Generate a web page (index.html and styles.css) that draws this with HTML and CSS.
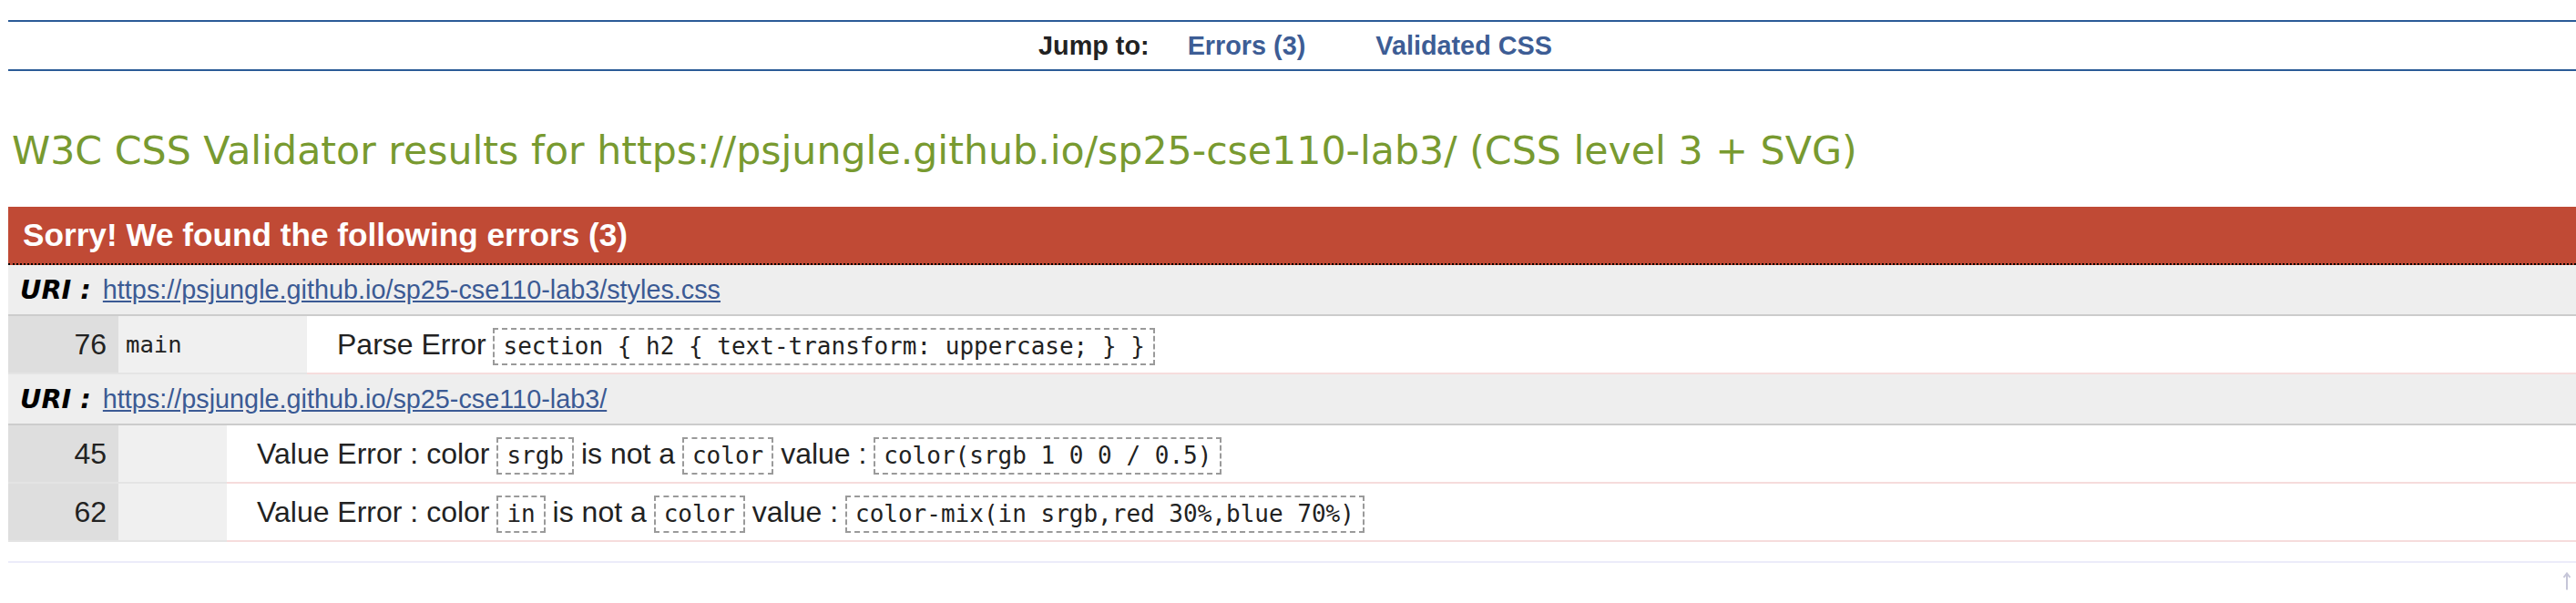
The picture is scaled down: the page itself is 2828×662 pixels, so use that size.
FILE: index.html
```html
<!DOCTYPE html>
<html lang="en">
<head>
<meta charset="utf-8">
<title>W3C CSS Validator results</title>
<link rel="stylesheet" href="styles.css">
</head>
<body>
<nav class="jump">
  <span class="jump-label">Jump to:</span>
  <a class="jump-link" href="#errors">Errors (3)</a>
  <a class="jump-link jump-link--last" href="#css">Validated CSS</a>
</nav>

<h2 class="title">W3C CSS Validator results for https://psjungle.github.io/sp25-cse110-lab3/ (CSS level 3 + SVG)</h2>

<div class="errors" id="errors">
  <h3 class="errors-head">Sorry! We found the following errors (3)</h3>

  <div class="uri-line"><span class="uri-label">URI :</span> <a class="uri-link" href="#">https://psjungle.github.io/sp25-cse110-lab3/styles.css</a></div>
  <table class="err-table">
    <tr>
      <td class="ln">76</td>
      <td class="ctx ctx--wide">main</td>
      <td class="msg">Parse Error <code class="snip">section { h2 { text-transform: uppercase; } }</code></td>
    </tr>
  </table>

  <div class="uri-line"><span class="uri-label">URI :</span> <a class="uri-link" href="#">https://psjungle.github.io/sp25-cse110-lab3/</a></div>
  <table class="err-table">
    <tr>
      <td class="ln">45</td>
      <td class="ctx ctx--narrow"></td>
      <td class="msg">Value Error : color <code class="snip">srgb</code> is not a <code class="snip">color</code> value : <code class="snip">color(srgb 1 0 0 / 0.5)</code></td>
    </tr>
    <tr>
      <td class="ln">62</td>
      <td class="ctx ctx--narrow"></td>
      <td class="msg">Value Error : color <code class="snip">in</code> is not a <code class="snip">color</code> value : <code class="snip">color-mix(in srgb,red 30%,blue 70%)</code></td>
    </tr>
  </table>
</div>

<div class="backtop">
  <svg class="backtop-icon" width="10" height="20" viewBox="0 0 10 20" aria-hidden="true">
    <path d="M5 1.5 V19.5" stroke="#c6c6d8" stroke-width="2" fill="none"/>
    <path d="M1.5 6 L5 1.5 L8.5 6" stroke="#c6c6d8" stroke-width="2" fill="none"/>
  </svg>
</div>
</body>
</html>
```

FILE: styles.css
```css
html, body {
  background: #ffffff;
}
body {
  margin: 0 0 0 9px;
  font-family: "Liberation Sans", Arial, Helvetica, sans-serif;
  font-size: 32px;
  color: #222222;
}

/* Jump bar */
.jump {
  margin-top: 22px;
  border-top: 2px solid #2b5b97;
  border-bottom: 2px solid #2b5b97;
  height: 52px;
  display: flex;
  align-items: center;
  justify-content: center;
  padding-left: 7px;
  font-size: 28.8px;
  font-weight: bold;
}
.jump-label {
  color: #222222;
  margin-right: 42px;
}
.jump-link {
  color: #3d5d95;
  text-decoration: none;
  margin-right: 77px;
}
.jump-link--last {
  margin-right: 0;
}

/* Title */
.title {
  margin: 59px 0 34px 4px;
  font-family: "DejaVu Sans", Verdana, sans-serif;
  font-weight: normal;
  font-size: 42.7px;
  line-height: 56px;
  color: #789a30;
  white-space: nowrap;
}

/* Errors block */
.errors {
  border-bottom: 2px solid #ececfa;
  padding-bottom: 21px;
}
.errors-head {
  margin: 0;
  background: #c04a35;
  color: #ffffff;
  font-size: 35.2px;
  font-weight: bold;
  line-height: 62px;
  padding-left: 16px;
  border-bottom: 2px dotted #000000;
}
.uri-line {
  background: #eeeeee;
  border-bottom: 2px solid #cccccc;
  line-height: 54px;
  padding-left: 13px;
  font-size: 28.8px;
}
.uri-label {
  font-family: "DejaVu Sans", Verdana, sans-serif;
  font-weight: bold;
  font-style: italic;
  color: #000000;
  margin-right: 5px;
}
.uri-link {
  color: #3b5a94;
  text-decoration: underline;
}

.err-table {
  width: 100%;
  border-collapse: separate;
  border-spacing: 0;
}
.err-table td {
  padding: 0;
  line-height: 62px;
  vertical-align: middle;
  white-space: nowrap;
}
.ln {
  width: 108px;
  background: #dedede;
  text-align: right;
  padding-right: 13px !important;
  border-bottom: 2px solid #e4e4e4;
}
.ctx {
  background: #f0f0f0;
  font-family: "DejaVu Sans Mono", monospace;
  font-size: 25.6px;
  border-bottom: 2px solid #e4e4e4;
}
.ctx--wide {
  width: 199px;
  padding-left: 8px !important;
}
.ctx--narrow {
  width: 119px;
}
.msg {
  background: #ffffff;
  padding-left: 33px !important;
  border-bottom: 2px solid #f6dcdc;
}
.snip {
  display: inline-block;
  font-family: "DejaVu Sans Mono", monospace;
  font-size: 26px;
  line-height: 33px;
  padding: 2px 9px;
  margin: 0 -1px;
  border: 2px dashed #9a9a9a;
  color: #222222;
}

.backtop {
  display: flex;
  justify-content: flex-end;
  padding-right: 5px;
  padding-top: 10px;
}
.backtop-icon {
  display: block;
}
```
